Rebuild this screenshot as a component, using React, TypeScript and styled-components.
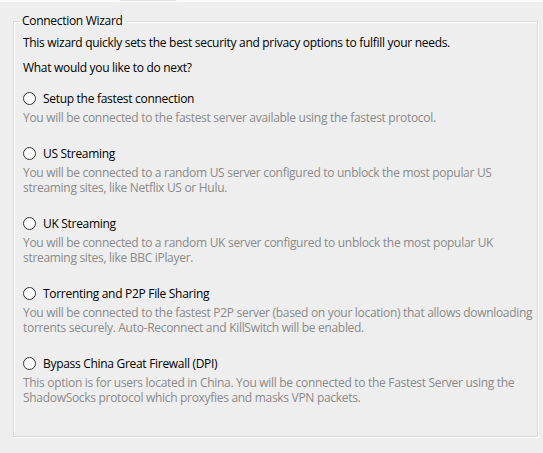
import React from "react";
import styled, { createGlobalStyle } from "styled-components";

const Global = createGlobalStyle`
  html, body { margin: 0; padding: 0; background: #eeeeee; }
  body { font-family: "Segoe UI", "Open Sans", "Noto Sans", sans-serif; font-size: 12px; letter-spacing: -0.3px; color: #000; }
  #root { width: 543px; height: 453px; overflow: hidden; }
`;

const Page = styled.div`
  width: 543px;
  height: 453px;
  display: flex;
  flex-direction: column;
  background: #eeeeee;
`;

const TopStrip = styled.div`
  flex: none;
  height: 2px;
  background: #fbfbfb;
  display: flex;
`;

const TabEdge = styled.div`
  margin-left: 119px;
  width: 56px;
  height: 1px;
  background: #e3e3e3;
  border-left: 1px solid #fff;
  border-right: 1px solid #fff;
`;

const Group = styled.fieldset`
  flex: none;
  box-sizing: border-box;
  margin: 11px 5px 0 13px;
  height: 424px;
  padding: 6px 10px 0 9px;
  border: 1px solid #d9d9d9;
  box-shadow: 1px 1px 0 #ffffff, inset 1px 1px 0 #ffffff;
  min-width: 0;
  overflow: hidden;
`;

const Legend = styled.legend`
  padding: 0 3px;
  margin-left: -4px;
  line-height: 16px;
  font-size: 12px;
  color: #000;
`;

const Intro = styled.p<{ $gap: number }>`
  margin: 0 0 ${(p) => p.$gap}px 0;
  line-height: 15px;
  color: #000;
  white-space: nowrap;
`;

const Options = styled.div`
  display: flex;
  flex-direction: column;
  gap: 20px;
`;

const Option = styled.label`
  display: flex;
  flex-direction: column;
  gap: 4px;
  cursor: default;
`;

const RadioRow = styled.span`
  display: flex;
  align-items: center;
  gap: 7px;
  line-height: 15px;
  color: #000;
  white-space: nowrap;
`;

const RadioCircle = styled.span`
  box-sizing: border-box;
  width: 13px;
  height: 13px;
  border-radius: 50%;
  border: 1px solid #333333;
  background: #ffffff;
  flex: none;
`;

const Desc = styled.span`
  line-height: 15.5px;
  color: #8a8a8a;
  white-space: nowrap;
`;

const options = [
  {
    title: "Setup the fastest connection",
    desc: ["You will be connected to the fastest server available using the fastest protocol."],
  },
  {
    title: "US Streaming",
    desc: [
      "You will be connected to a random US server configured to unblock the most popular US",
      "streaming sites, like Netflix US or Hulu.",
    ],
  },
  {
    title: "UK Streaming",
    desc: [
      "You will be connected to a random UK server configured to unblock the most popular UK",
      "streaming sites, like BBC iPlayer.",
    ],
  },
  {
    title: "Torrenting and P2P File Sharing",
    desc: [
      "You will be connected to the fastest P2P server (based on your location) that allows downloading",
      "torrents securely. Auto-Reconnect and KillSwitch will be enabled.",
    ],
  },
  {
    title: "Bypass China Great Firewall (DPI)",
    desc: [
      "This option is for users located in China. You will be connected to the Fastest Server using the",
      "ShadowSocks protocol which proxyfies and masks VPN packets.",
    ],
  },
];

export default function App() {
  return (
    <>
      <Global />
      <Page>
        <TopStrip>
          <TabEdge />
        </TopStrip>
        <Group>
          <Legend>Connection Wizard</Legend>
          <Intro $gap={10}>
            This wizard quickly sets the best security and privacy options to fulfill your needs.
          </Intro>
          <Intro $gap={16}>What would you like to do next?</Intro>
          <Options>
            {options.map((o) => (
              <Option key={o.title}>
                <RadioRow>
                  <RadioCircle />
                  {o.title}
                </RadioRow>
                <Desc>
                  {o.desc.map((l, i) => (
                    <React.Fragment key={i}>
                      {l}
                      {i < o.desc.length - 1 && <br />}
                    </React.Fragment>
                  ))}
                </Desc>
              </Option>
            ))}
          </Options>
        </Group>
      </Page>
    </>
  );
}
